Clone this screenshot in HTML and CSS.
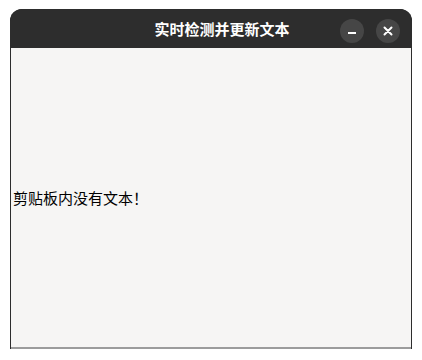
FILE: index.html
```html
<!DOCTYPE html>
<html lang="zh">
<head>
<meta charset="utf-8">
<link rel="stylesheet" href="styles.css">
</head>
<body>
<div class="window">
  <div class="titlebar">
    <div class="title">实时检测并更新文本</div>
    <div class="buttons">
      <div class="btn">
        <svg width="24" height="24" viewBox="0 0 24 24"><rect x="8" y="13" width="8" height="2" fill="#fff"/></svg>
      </div>
      <div class="btn">
        <svg width="24" height="24" viewBox="0 0 24 24"><path d="M8.5 8.5 L15.5 15.5 M15.5 8.5 L8.5 15.5" stroke="#fff" stroke-width="2" stroke-linecap="round"/></svg>
      </div>
    </div>
  </div>
  <div class="content">
    <div class="label">剪贴板内没有文本！</div>
  </div>
</div>
</body>
</html>
```
FILE: styles.css
```css
html, body { margin: 0; padding: 0; background: #ffffff; }
body { padding: 9px 0 0 10px; }
.window {
  width: 402px;
  height: 340px;
  display: flex;
  flex-direction: column;
  border-radius: 12px 12px 0 0;
  overflow: hidden;
  background: #2d2d2d;
}
.titlebar {
  height: 39px;
  flex: none;
  position: relative;
  display: flex;
  align-items: center;
  justify-content: center;
  background: #2d2d2d;
}
.title {
  color: #ffffff;
  font-family: "Noto Sans CJK SC", sans-serif;
  font-weight: 700;
  font-size: 15px;
  margin-left: 22px;
}
.buttons {
  position: absolute;
  right: 12px;
  top: 10px;
  display: flex;
  gap: 12px;
}
.btn {
  width: 24px;
  height: 24px;
  border-radius: 50%;
  background: #464646;
  display: flex;
}
.content {
  flex: 1;
  background: #f6f5f4;
  margin: 0 1px 0 1px;
  border-bottom: 2px solid #9c9c9c;
  display: flex;
  align-items: center;
  padding-left: 2px;
}
.label {
  font-family: "Noto Sans CJK SC", sans-serif;
  font-size: 15px;
  color: #000000;
}
```
